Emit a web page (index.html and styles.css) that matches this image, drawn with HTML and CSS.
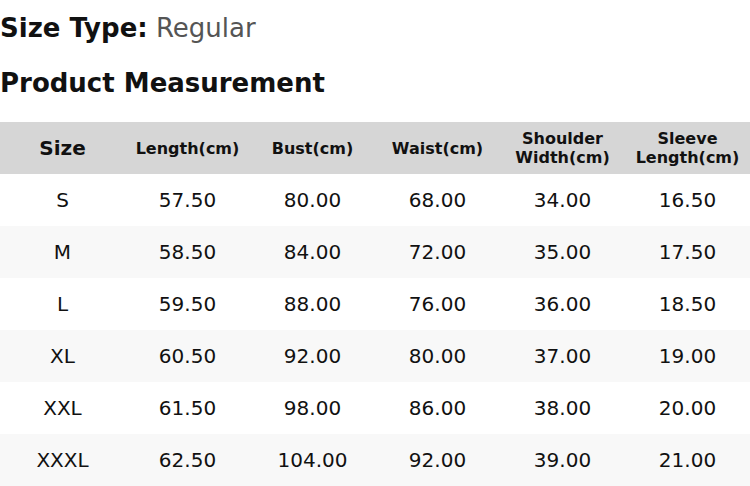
FILE: index.html
```html
<!DOCTYPE html>
<html>
<head>
<meta charset="utf-8">
<link rel="stylesheet" href="styles.css">
</head>
<body>
<div class="size-type"><span class="label">Size Type:</span> <span class="value">Regular</span></div>
<h2 class="title">Product Measurement</h2>
<table class="measure">
<thead>
<tr><th class="first">Size</th><th>Length(cm)</th><th>Bust(cm)</th><th>Waist(cm)</th><th>Shoulder<br>Width(cm)</th><th>Sleeve<br>Length(cm)</th></tr>
</thead>
<tbody>
<tr><td>S</td><td>57.50</td><td>80.00</td><td>68.00</td><td>34.00</td><td>16.50</td></tr>
<tr><td>M</td><td>58.50</td><td>84.00</td><td>72.00</td><td>35.00</td><td>17.50</td></tr>
<tr><td>L</td><td>59.50</td><td>88.00</td><td>76.00</td><td>36.00</td><td>18.50</td></tr>
<tr><td>XL</td><td>60.50</td><td>92.00</td><td>80.00</td><td>37.00</td><td>19.00</td></tr>
<tr><td>XXL</td><td>61.50</td><td>98.00</td><td>86.00</td><td>38.00</td><td>20.00</td></tr>
<tr><td>XXXL</td><td>62.50</td><td>104.00</td><td>92.00</td><td>39.00</td><td>21.00</td></tr>
</tbody>
</table>
</body>
</html>
```
FILE: styles.css
```css
html, body {
  margin: 0;
  padding: 0;
  background: #fff;
  font-family: "DejaVu Sans", sans-serif;
  color: #111;
}
.size-type {
  font-size: 26px;
  line-height: 30px;
  padding-top: 13px;
}
.size-type .label {
  font-weight: bold;
}
.size-type .value {
  color: #555;
}
.title {
  margin: 0;
  font-size: 26px;
  line-height: 30px;
  padding-top: 25px;
  font-weight: bold;
}
.measure {
  margin-top: 24px;
  width: 750px;
  border-collapse: collapse;
  table-layout: fixed;
}
.measure th {
  background: #d6d6d6;
  font-size: 16px;
  line-height: 19px;
  font-weight: bold;
  height: 52px;
  padding: 0;
  text-align: center;
}
.measure th.first {
  font-size: 20px;
}
.measure td {
  height: 52px;
  padding: 0;
  text-align: center;
  font-size: 20px;
}
.measure tbody tr:nth-child(even) td {
  background: #f8f8f8;
}
```
